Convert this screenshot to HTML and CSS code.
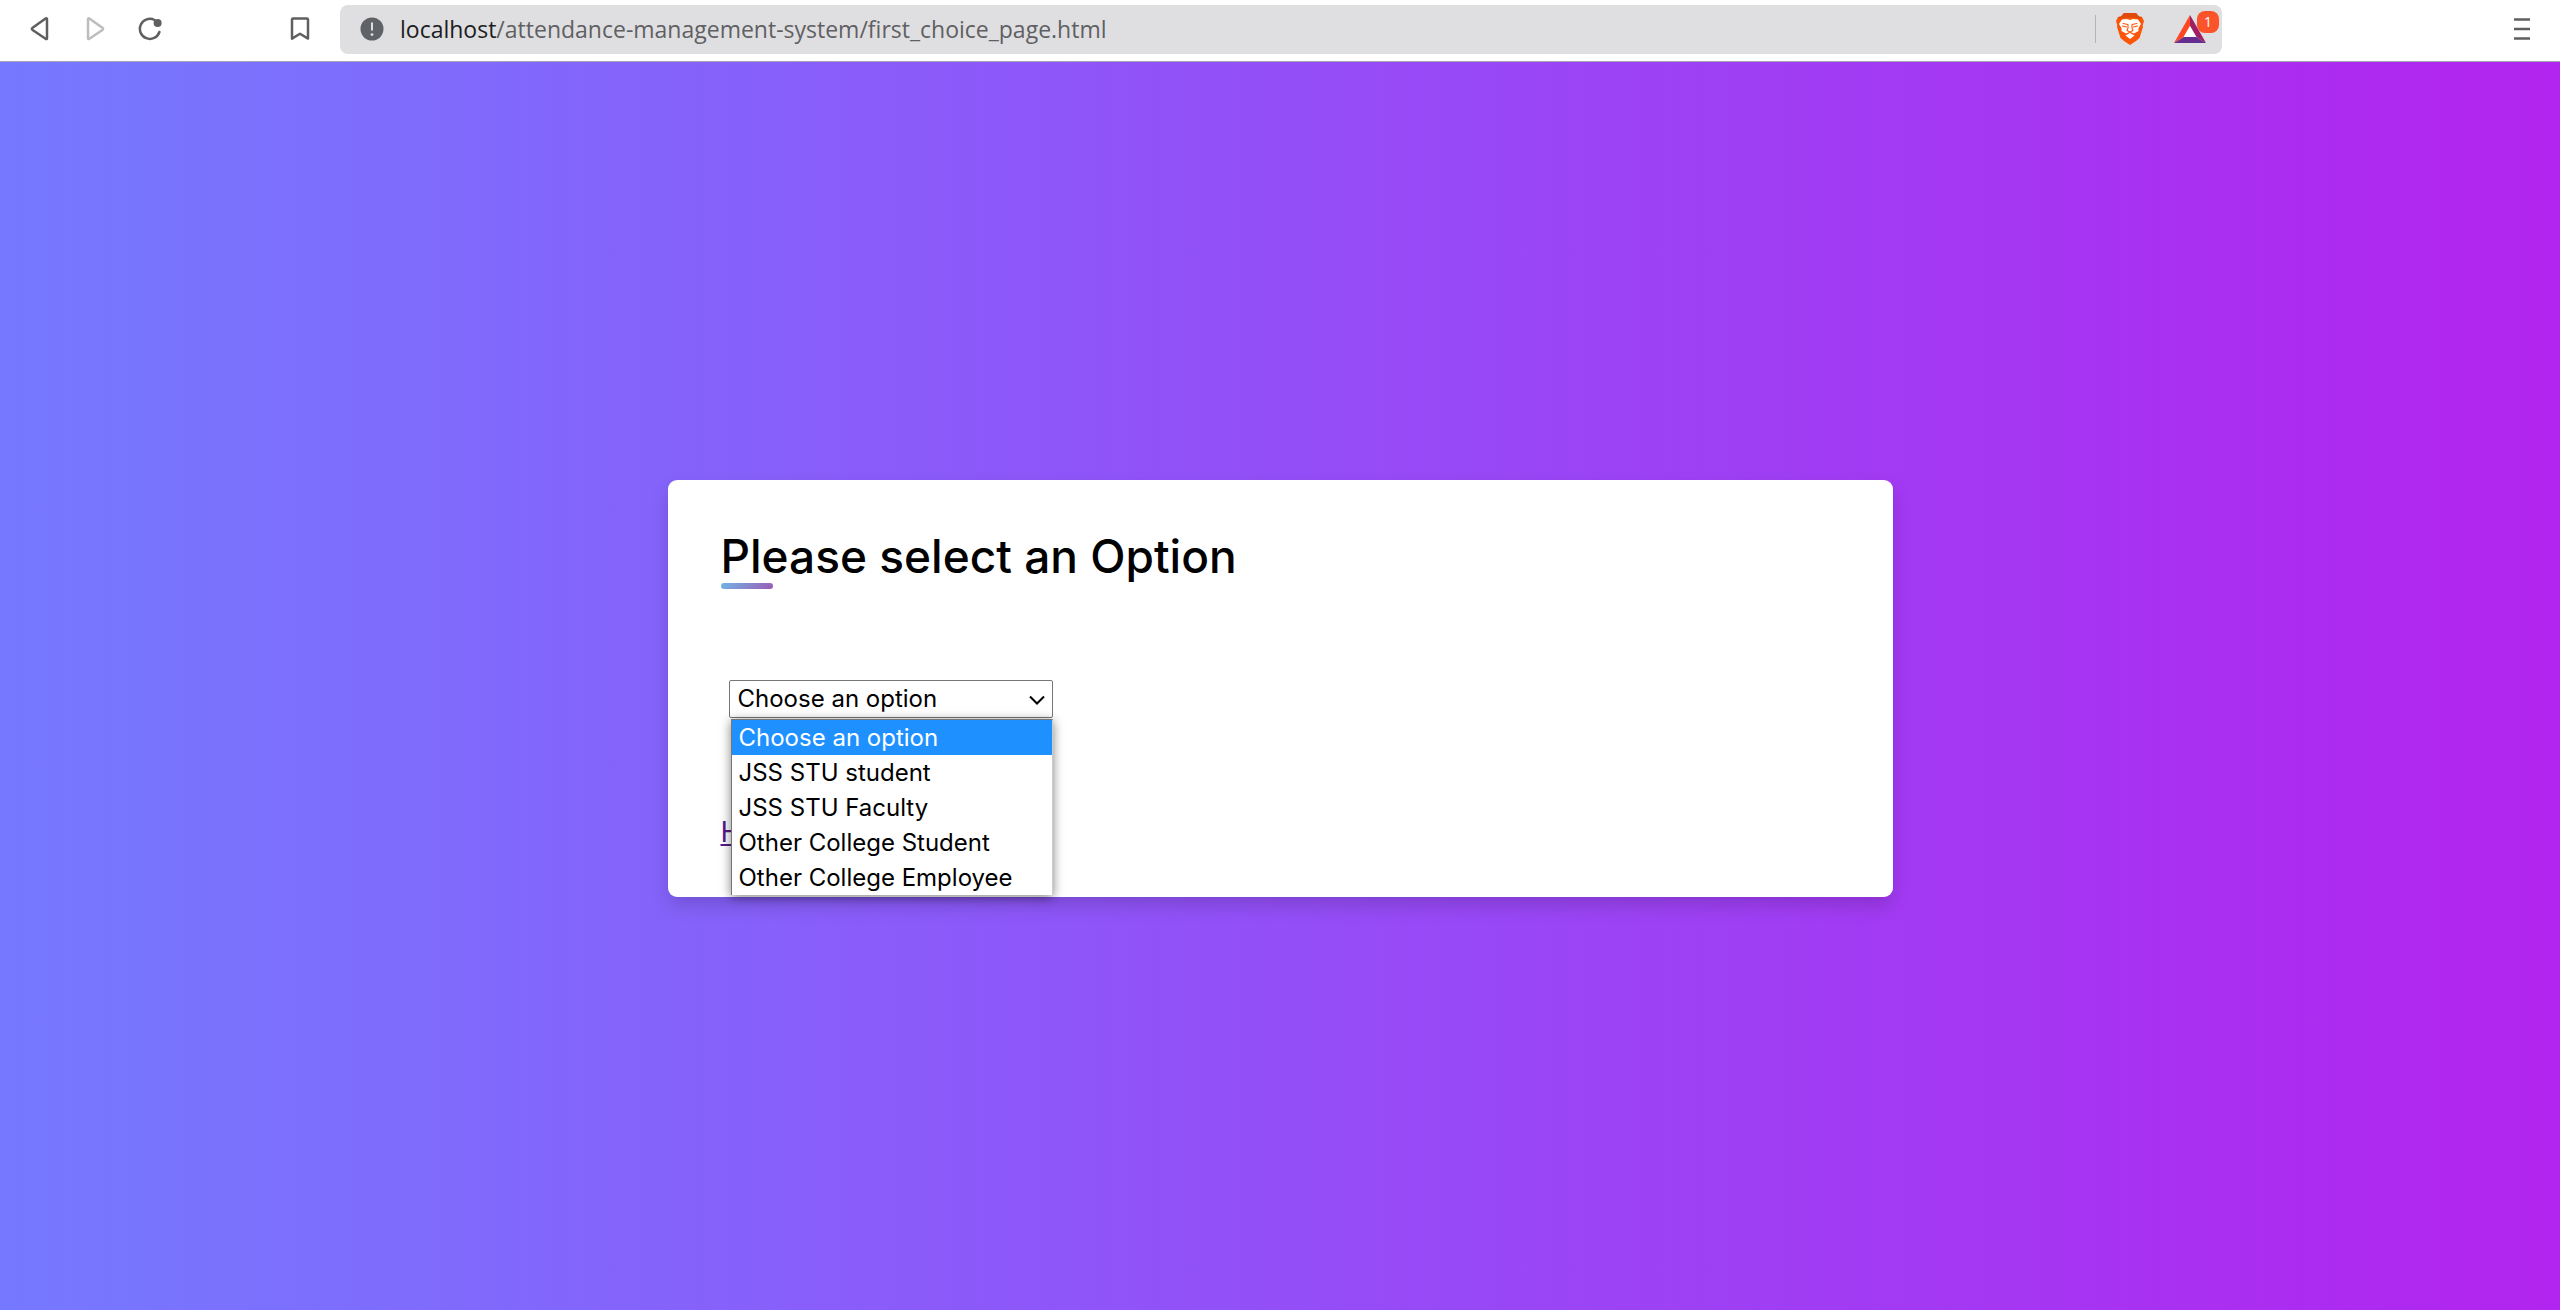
FILE: index.html
```html
<!DOCTYPE html>
<html lang="en">
<head>
<meta charset="utf-8">
<title>Attendance Management System</title>
<link rel="stylesheet" href="styles.css">
</head>
<body>
<header class="toolbar">
  <nav class="nav-buttons" aria-label="Browser navigation">
    <button class="icon-button" type="button" aria-label="Back">
      <svg width="24" height="24" viewBox="0 0 24 24"><path d="M19 2.2V21.2Q19 22.6 17.6 21.8L4.6 13Q3.2 11.8 4.6 10.8L17.6 1.6Q19 .8 19 2.2Z"/></svg>
    </button>
    <button class="icon-button faded" type="button" aria-label="Forward" disabled>
      <svg width="24" height="24" viewBox="0 0 24 24"><path d="M5 2.2V21.2Q5 22.6 6.4 21.8L19.4 13Q20.8 11.8 19.4 10.8L6.4 1.6Q5 .8 5 2.2Z"/></svg>
    </button>
    <button class="icon-button" type="button" aria-label="Reload">
      <svg width="24" height="24" viewBox="0 0 24 24"><path d="M16.5 3A10 10 0 1 0 21.4 15"/><circle class="solid" cx="19.6" cy="6" r="4"/></svg>
    </button>
  </nav>
  <button class="icon-button" type="button" aria-label="Bookmark this page">
    <svg width="24" height="24" viewBox="0 0 24 24"><path d="M4 2.6Q4 1.4 5.2 1.4H18.8Q20 1.4 20 2.6V21.6L12 16.8L4 21.6Z"/></svg>
  </button>
  <div class="address">
    <svg class="site-info" width="24" height="24" viewBox="0 0 24 24"><circle cx="12" cy="12" r="11.5" fill="#5f6368"/><path d="M12 5.5V13.5" stroke="#dfdfe1" stroke-width="2"/><circle cx="12" cy="17.6" r="1.4" fill="#dfdfe1"/></svg>
    <p class="url"><span class="host">localhost</span>/attendance-management-system/first_choice_page.html</p>
    <span class="divider"></span>
    <button class="icon-button" type="button" aria-label="Brave Shields">
      <svg class="plain" width="28" height="32" viewBox="0 0 28 32">
        <path fill="#fb5607" d="M8 0H20L23 3.500L26 4L28 8L26.800 12L27 14L23.500 25L20 28L14 32L8 28L4.500 25L1 14L1.200 12L0 8L2 4L5 3.500Z"/>
        <path fill="#dd4a0c" d="M8 0H20L23 3.500L26 4L24 6L18 4.500H10L4 6L2 4L5 3.500Z"/>
        <path fill="#fff" d="M6 6.500L11 6L14 7L17 6L22 6.500L25 11L22.500 15L22.500 18L18 20.500L14 18.800L10 20.500L5.500 18L5.500 15L3 11Z"/>
        <path fill="#fff" d="M14 20L18.500 22.500L14 26L9.500 22.500Z"/>
        <path fill="none" stroke="#fb5607" stroke-width="1.100" d="M7 10.500L12 11.500V15L11 17.500L14 19L17 17.500L16 15V11.500L21 10.500M6.500 13L10.500 14M21.500 13L17.500 14"/>
      </svg>
    </button>
    <button class="icon-button rewards" type="button" aria-label="Brave Rewards, 1 notification">
      <svg class="plain" width="32" height="28" viewBox="0 0 32 28">
        <path fill="#ff4724" d="M16 0V11L10 22L0 28Z"/><path fill="#9e1f63" d="M16 0L32 28L22 22L16 11Z"/><path fill="#662d91" d="M0 28L10 22H22L32 28Z"/><path fill="#fff" d="M16 11L22.500 22H9.500Z"/>
      </svg>
      <span class="badge">1</span>
    </button>
  </div>
  <button class="icon-button menu" type="button" aria-label="Menu">
    <svg width="24" height="24" viewBox="0 0 24 24"><path d="M4 2.500H20M4 12H20M4 21.500H20"/></svg>
  </button>
</header>
<main class="page">
  <section class="card">
    <h1 class="title">Please select an Option</h1>
    <form class="choice">
      <select class="select" aria-label="Choose an option">
        <option>Choose an option</option>
        <option>JSS STU student</option>
        <option>JSS STU Faculty</option>
        <option>Other College Student</option>
        <option>Other College Employee</option>
      </select>
      <svg class="chevron" width="16" height="10" viewBox="0 0 16 10"><path d="M1 1.500L8 8.500L15 1.500"/></svg>
      <ul class="options" role="listbox">
        <li class="option selected" role="option" aria-selected="true">Choose an option</li>
        <li class="option" role="option">JSS STU student</li>
        <li class="option" role="option">JSS STU Faculty</li>
        <li class="option" role="option">Other College Student</li>
        <li class="option" role="option">Other College Employee</li>
      </ul>
    </form>
    <a class="home" href="index.html" aria-label="Home">H</a>
  </section>
</main>
</body>
</html>
```
FILE: styles.css
```css
* {
  box-sizing: border-box;
  margin: 0;
  padding: 0;
}

body {
  display: flex;
  flex-direction: column;
  min-height: 100vh;
  font-family: Inter, "Open Sans", sans-serif;
  color: #000;
}

.toolbar {
  display: grid;
  grid-template-columns: 260px 80px 1fr 338px;
  align-items: center;
  height: 62px;
  padding-bottom: 3px;
  border-bottom: 1px solid #a9a5b8;
  background: #fff;
}

.nav-buttons {
  display: flex;
  gap: 31px;
  padding-left: 28px;
}

.icon-button {
  display: flex;
  flex: none;
  justify-content: center;
  width: 24px;
  border: 0;
  background: none;
}

.toolbar > .icon-button {
  justify-self: center;
}

.icon-button svg {
  flex: none;
  fill: none;
  stroke: #5f5f61;
  stroke-width: 2.5px;
  stroke-linejoin: round;
  stroke-linecap: round;
}

.icon-button .plain {
  stroke: none;
  stroke-width: 1px;
}

.icon-button .solid {
  fill: #5f5f61;
  stroke: none;
}

.icon-button.faded svg {
  stroke: #bdbdbf;
}

.toolbar > .menu {
  justify-self: end;
  margin-right: 26px;
}

.menu svg {
  stroke-linecap: butt;
}

.address {
  display: flex;
  align-items: center;
  height: 49px;
  padding: 0 20px;
  border-radius: 8px;
  background: #dfdfe1;
}

.site-info {
  flex: none;
}

.url {
  flex: 1;
  padding-left: 16px;
  font-family: "Open Sans", sans-serif;
  font-size: 23px;
  line-height: 32px;
  color: #5f6063;
}

.host {
  color: #1c1d1f;
}

.divider {
  width: 1px;
  height: 28px;
  margin-right: 22px;
  background: #b4b4b6;
}

.rewards {
  position: relative;
  margin-left: 36px;
}

.badge {
  position: absolute;
  top: -4px;
  left: 19px;
  width: 22px;
  border-radius: 8px;
  background: #fb542b;
  font-family: "Open Sans", sans-serif;
  font-size: 14px;
  line-height: 22px;
  text-align: center;
  color: #fff;
}

.page {
  display: flex;
  flex: 1;
  align-items: center;
  justify-content: center;
  padding-top: 4px;
  background: linear-gradient(to right, #7579ff, #b224ef);
}

.card {
  width: 100%;
  max-width: 1225px;
  padding: 43px 53px 44px;
  border-radius: 9px;
  background: #fff;
  box-shadow: 0 9px 18px rgba(0, 0, 0, 0.15);
}

.title {
  position: relative;
  font-size: 46px;
  font-weight: 500;
  line-height: 66px;
}

.title::before {
  content: "";
  position: absolute;
  left: 0;
  bottom: 0;
  width: 52px;
  height: 6px;
  border-radius: 3px;
  background: linear-gradient(135deg, #71b7e6, #9b59b6);
}

.choice {
  position: relative;
  width: 324px;
  margin: 91px 0 93px 8px;
}

.select {
  display: block;
  width: 100%;
  height: 38px;
  padding: 0 8px;
  appearance: none;
  border: 1px solid #767676;
  border-radius: 2px;
  background: #fff;
  font-family: inherit;
  font-size: 24px;
  color: #000;
}

.chevron {
  position: absolute;
  top: 15px;
  right: 8px;
  fill: none;
  stroke: #000;
  stroke-width: 2px;
  pointer-events: none;
}

.options {
  position: absolute;
  top: 39px;
  left: 2px;
  right: 0;
  border: 1px solid #767676;
  border-right-color: #ccc;
  border-bottom: 0;
  background: #fff;
  box-shadow: 0 2px 10px rgba(0, 0, 0, 0.5);
  list-style: none;
}

.option {
  padding-left: 7px;
  font-size: 24px;
  line-height: 35px;
}

.option.selected {
  background: #1e90ff;
  color: #fff;
}

.home {
  display: block;
  width: max-content;
  font-size: 28px;
  line-height: 42px;
  color: #551a8b;
}
```
